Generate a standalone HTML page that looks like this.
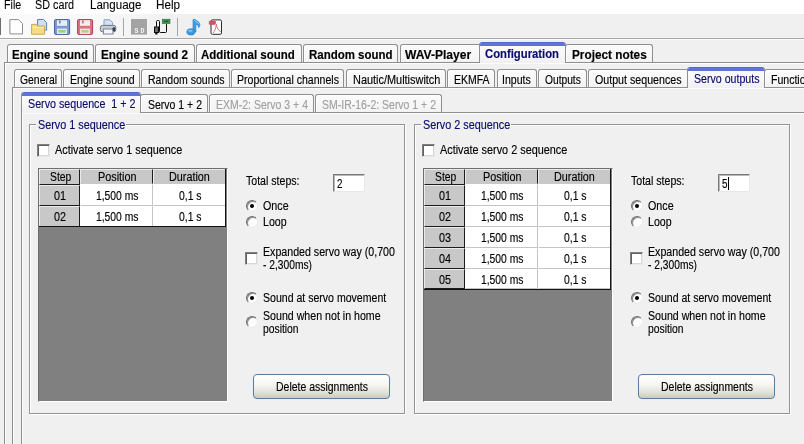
<!DOCTYPE html><html><head><meta charset="utf-8"><title>Servo sequence</title><style>
html,body{margin:0;padding:0}body{width:804px;height:444px;overflow:hidden;background:#f0f0f0;position:relative;font-family:"Liberation Sans", sans-serif}
#r{position:absolute;left:0;top:0;width:804px;height:444px;overflow:hidden;will-change:transform}
#r>div{position:absolute}
#r>span{position:absolute;white-space:pre;line-height:1;transform-origin:0 0;display:block;-webkit-text-stroke:0.15px}
</style></head><body><div id="r">
<div style="left:0px;top:0px;width:804px;height:13.5px;background:#fff"></div>
<div style="left:0px;top:37.5px;width:804px;height:1px;background:#a8a8a8"></div>
<div style="left:0px;top:38.5px;width:804px;height:1px;background:#fafafa"></div>
<div style="left:4px;top:62px;width:816px;height:398px;border:1px solid #8e8f8f;background:#f0f0f0;box-shadow:inset 1px 1px 0 #fcfcfc"></div>
<div style="left:7px;top:44px;width:87px;height:18px;background:linear-gradient(#fbfbfb,#f3f3f3);border:1px solid #8e8f8f;border-bottom:none;border-radius:3px 3px 0 0;box-sizing:border-box;box-shadow:inset 1px 1px 0 #fff"></div>
<div style="left:95px;top:44px;width:100px;height:18px;background:linear-gradient(#fbfbfb,#f3f3f3);border:1px solid #8e8f8f;border-bottom:none;border-radius:3px 3px 0 0;box-sizing:border-box;box-shadow:inset 1px 1px 0 #fff"></div>
<div style="left:196px;top:44px;width:106px;height:18px;background:linear-gradient(#fbfbfb,#f3f3f3);border:1px solid #8e8f8f;border-bottom:none;border-radius:3px 3px 0 0;box-sizing:border-box;box-shadow:inset 1px 1px 0 #fff"></div>
<div style="left:303px;top:44px;width:95px;height:18px;background:linear-gradient(#fbfbfb,#f3f3f3);border:1px solid #8e8f8f;border-bottom:none;border-radius:3px 3px 0 0;box-sizing:border-box;box-shadow:inset 1px 1px 0 #fff"></div>
<div style="left:400px;top:44px;width:81px;height:18px;background:linear-gradient(#fbfbfb,#f3f3f3);border:1px solid #8e8f8f;border-bottom:none;border-radius:3px 3px 0 0;box-sizing:border-box;box-shadow:inset 1px 1px 0 #fff"></div>
<div style="left:565px;top:44px;width:88px;height:18px;background:linear-gradient(#fbfbfb,#f3f3f3);border:1px solid #8e8f8f;border-bottom:none;border-radius:3px 3px 0 0;box-sizing:border-box;box-shadow:inset 1px 1px 0 #fff"></div>
<div style="left:479px;top:42px;width:87px;height:21px;background:linear-gradient(#fcfcfd 0,#f8f8fb 55%,#f0f0f0 100%);border:1px solid #8e8f8f;border-top:none;border-bottom:none;border-radius:3px 3px 0 0;box-sizing:border-box;overflow:hidden"><div style="left:-1px;top:0;width:87px;height:4px;background:linear-gradient(#4d61c2,#6177d8 35%,#5c71d1);position:absolute"></div></div>
<div style="left:12px;top:87px;width:808px;height:373px;border:1px solid #8e8f8f;background:#f0f0f0;box-shadow:inset 1px 1px 0 #fcfcfc"></div>
<div style="left:14px;top:69px;width:48px;height:18px;background:linear-gradient(#fbfbfb,#f3f3f3);border:1px solid #8e8f8f;border-bottom:none;border-radius:3px 3px 0 0;box-sizing:border-box;box-shadow:inset 1px 1px 0 #fff"></div>
<div style="left:63px;top:69px;width:77px;height:18px;background:linear-gradient(#fbfbfb,#f3f3f3);border:1px solid #8e8f8f;border-bottom:none;border-radius:3px 3px 0 0;box-sizing:border-box;box-shadow:inset 1px 1px 0 #fff"></div>
<div style="left:141px;top:69px;width:89px;height:18px;background:linear-gradient(#fbfbfb,#f3f3f3);border:1px solid #8e8f8f;border-bottom:none;border-radius:3px 3px 0 0;box-sizing:border-box;box-shadow:inset 1px 1px 0 #fff"></div>
<div style="left:231px;top:69px;width:113px;height:18px;background:linear-gradient(#fbfbfb,#f3f3f3);border:1px solid #8e8f8f;border-bottom:none;border-radius:3px 3px 0 0;box-sizing:border-box;box-shadow:inset 1px 1px 0 #fff"></div>
<div style="left:346px;top:69px;width:100px;height:18px;background:linear-gradient(#fbfbfb,#f3f3f3);border:1px solid #8e8f8f;border-bottom:none;border-radius:3px 3px 0 0;box-sizing:border-box;box-shadow:inset 1px 1px 0 #fff"></div>
<div style="left:447px;top:69px;width:48px;height:18px;background:linear-gradient(#fbfbfb,#f3f3f3);border:1px solid #8e8f8f;border-bottom:none;border-radius:3px 3px 0 0;box-sizing:border-box;box-shadow:inset 1px 1px 0 #fff"></div>
<div style="left:497px;top:69px;width:40px;height:18px;background:linear-gradient(#fbfbfb,#f3f3f3);border:1px solid #8e8f8f;border-bottom:none;border-radius:3px 3px 0 0;box-sizing:border-box;box-shadow:inset 1px 1px 0 #fff"></div>
<div style="left:538px;top:69px;width:49px;height:18px;background:linear-gradient(#fbfbfb,#f3f3f3);border:1px solid #8e8f8f;border-bottom:none;border-radius:3px 3px 0 0;box-sizing:border-box;box-shadow:inset 1px 1px 0 #fff"></div>
<div style="left:588px;top:69px;width:101px;height:18px;background:linear-gradient(#fbfbfb,#f3f3f3);border:1px solid #8e8f8f;border-bottom:none;border-radius:3px 3px 0 0;box-sizing:border-box;box-shadow:inset 1px 1px 0 #fff"></div>
<div style="left:764px;top:69px;width:67px;height:18px;background:linear-gradient(#fbfbfb,#f3f3f3);border:1px solid #8e8f8f;border-bottom:none;border-radius:3px 3px 0 0;box-sizing:border-box;box-shadow:inset 1px 1px 0 #fff"></div>
<div style="left:687px;top:67px;width:78px;height:21px;background:linear-gradient(#fcfcfd 0,#f8f8fb 55%,#f0f0f0 100%);border:1px solid #8e8f8f;border-top:none;border-bottom:none;border-radius:3px 3px 0 0;box-sizing:border-box;overflow:hidden"><div style="left:-1px;top:0;width:78px;height:4px;background:linear-gradient(#4d61c2,#6177d8 35%,#5c71d1);position:absolute"></div></div>
<div style="left:21px;top:112px;width:799px;height:348px;border:1px solid #8e8f8f;background:#f0f0f0;box-shadow:inset 1px 1px 0 #fcfcfc"></div>
<div style="left:140px;top:94px;width:68px;height:18px;background:linear-gradient(#fbfbfb,#f3f3f3);border:1px solid #8e8f8f;border-bottom:none;border-radius:3px 3px 0 0;box-sizing:border-box;box-shadow:inset 1px 1px 0 #fff"></div>
<div style="left:209px;top:94px;width:105px;height:18px;background:linear-gradient(#fbfbfb,#f3f3f3);border:1px solid #8e8f8f;border-bottom:none;border-radius:3px 3px 0 0;box-sizing:border-box;box-shadow:inset 1px 1px 0 #fff"></div>
<div style="left:315px;top:94px;width:127px;height:18px;background:linear-gradient(#fbfbfb,#f3f3f3);border:1px solid #8e8f8f;border-bottom:none;border-radius:3px 3px 0 0;box-sizing:border-box;box-shadow:inset 1px 1px 0 #fff"></div>
<div style="left:21px;top:92px;width:120px;height:21px;background:linear-gradient(#fcfcfd 0,#f8f8fb 55%,#f0f0f0 100%);border:1px solid #8e8f8f;border-top:none;border-bottom:none;border-radius:3px 3px 0 0;box-sizing:border-box;overflow:hidden"><div style="left:-1px;top:0;width:120px;height:4px;background:linear-gradient(#4d61c2,#6177d8 35%,#5c71d1);position:absolute"></div></div>
<div style="left:29px;top:124px;width:376px;height:290px;border:1px solid #949494;box-shadow:1px 1px 0 #fff, inset 1px 1px 0 #fff;box-sizing:border-box"></div>
<div style="left:36px;top:118px;width:90px;height:13px;background:#f0f0f0"></div>
<div style="left:37px;top:144px;width:13px;height:13px;box-sizing:border-box;background:#fff;border:1px solid;border-color:#808080 #e8e8e8 #e8e8e8 #808080;box-shadow:inset 1px 1px 0 #606060, inset -1px -1px 0 #d8d8d8"></div>
<div style="left:38px;top:168px;width:190px;height:234px;background:#808080;box-sizing:border-box;border:1px solid;border-color:#6e6e6e #fff #fff #6e6e6e"></div>
<div style="left:39px;top:169px;width:41px;height:16px;background:#c8c8c8;box-sizing:border-box;border:1px solid;border-color:#ebebeb #1c1c1c #1c1c1c #ebebeb"></div>
<div style="left:80px;top:169px;width:73px;height:15px;background:#c8c8c8;box-sizing:border-box;border:1px solid;border-color:#ebebeb #1c1c1c #c8c8c8 #ebebeb"></div>
<div style="left:153px;top:169px;width:73px;height:15px;background:#c8c8c8;box-sizing:border-box;border:1px solid;border-color:#ebebeb #1c1c1c #c8c8c8 #ebebeb"></div>
<div style="left:39px;top:185.0px;width:41px;height:20.900000000000006px;background:#c8c8c8;box-sizing:border-box;border:1px solid;border-color:#ebebeb #1c1c1c #1c1c1c #ebebeb"></div>
<div style="left:80px;top:184.0px;width:73px;height:21.900000000000006px;background:#fff;box-sizing:border-box;border:1px solid;border-color:#fff #c4c4c4 #c4c4c4 #fff"></div>
<div style="left:153px;top:184.0px;width:73px;height:21.900000000000006px;background:#fff;box-sizing:border-box;border:1px solid;border-color:#fff #c4c4c4 #c4c4c4 #fff"></div>
<div style="left:39px;top:205.9px;width:41px;height:20.900000000000006px;background:#c8c8c8;box-sizing:border-box;border:1px solid;border-color:#ebebeb #1c1c1c #1c1c1c #ebebeb"></div>
<div style="left:80px;top:205.9px;width:73px;height:20.900000000000006px;background:#fff;box-sizing:border-box;border:1px solid;border-color:#fff #c4c4c4 #c4c4c4 #fff"></div>
<div style="left:153px;top:205.9px;width:73px;height:20.900000000000006px;background:#fff;box-sizing:border-box;border:1px solid;border-color:#fff #c4c4c4 #c4c4c4 #fff"></div>
<div style="left:39px;top:226px;width:187px;height:1px;background:#111"></div>
<div style="left:225px;top:169px;width:1px;height:58px;background:#111"></div>
<div style="left:333px;top:174px;width:32px;height:18px;background:#fff;box-sizing:border-box;border:1px solid;border-color:#7a7a7a #e8e8e8 #e8e8e8 #7a7a7a;box-shadow:inset 1px 1px 0 #b8b8b8"></div>
<div style="left:246.3px;top:199.8px;width:12px;height:12px;box-sizing:border-box;border-radius:50%;background:#fcfcfc;border:1px solid;border-color:#6c6c6c #ebebeb #ebebeb #6c6c6c;box-shadow:inset 1px 1px 0 #8a8a8a"><div style="left:3px;top:3px;width:4px;height:4px;border-radius:50%;background:#000;position:absolute"></div></div>
<div style="left:246.3px;top:216px;width:12px;height:12px;box-sizing:border-box;border-radius:50%;background:#fcfcfc;border:1px solid;border-color:#6c6c6c #ebebeb #ebebeb #6c6c6c;box-shadow:inset 1px 1px 0 #8a8a8a"></div>
<div style="left:245px;top:252px;width:13px;height:13px;box-sizing:border-box;background:#fff;border:1px solid;border-color:#808080 #e8e8e8 #e8e8e8 #808080;box-shadow:inset 1px 1px 0 #606060, inset -1px -1px 0 #d8d8d8"></div>
<div style="left:246.3px;top:291.8px;width:12px;height:12px;box-sizing:border-box;border-radius:50%;background:#fcfcfc;border:1px solid;border-color:#6c6c6c #ebebeb #ebebeb #6c6c6c;box-shadow:inset 1px 1px 0 #8a8a8a"><div style="left:3px;top:3px;width:4px;height:4px;border-radius:50%;background:#000;position:absolute"></div></div>
<div style="left:246.3px;top:315.5px;width:12px;height:12px;box-sizing:border-box;border-radius:50%;background:#fcfcfc;border:1px solid;border-color:#6c6c6c #ebebeb #ebebeb #6c6c6c;box-shadow:inset 1px 1px 0 #8a8a8a"></div>
<div style="left:253px;top:374px;width:137px;height:24.5px;box-sizing:border-box;border:1px solid #5c7d9b;border-radius:4px;background:linear-gradient(#ffffff 0%,#f6f6f3 40%,#e2e2dc 75%,#c9ccbd 100%);box-shadow:0 0 0 1px rgba(225,238,248,.7)"></div>
<div style="left:414px;top:124px;width:376px;height:290px;border:1px solid #949494;box-shadow:1px 1px 0 #fff, inset 1px 1px 0 #fff;box-sizing:border-box"></div>
<div style="left:421px;top:118px;width:90px;height:13px;background:#f0f0f0"></div>
<div style="left:422px;top:144px;width:13px;height:13px;box-sizing:border-box;background:#fff;border:1px solid;border-color:#808080 #e8e8e8 #e8e8e8 #808080;box-shadow:inset 1px 1px 0 #606060, inset -1px -1px 0 #d8d8d8"></div>
<div style="left:423px;top:168px;width:190px;height:234px;background:#808080;box-sizing:border-box;border:1px solid;border-color:#6e6e6e #fff #fff #6e6e6e"></div>
<div style="left:424px;top:169px;width:41px;height:16px;background:#c8c8c8;box-sizing:border-box;border:1px solid;border-color:#ebebeb #1c1c1c #1c1c1c #ebebeb"></div>
<div style="left:465px;top:169px;width:73px;height:15px;background:#c8c8c8;box-sizing:border-box;border:1px solid;border-color:#ebebeb #1c1c1c #c8c8c8 #ebebeb"></div>
<div style="left:538px;top:169px;width:73px;height:15px;background:#c8c8c8;box-sizing:border-box;border:1px solid;border-color:#ebebeb #1c1c1c #c8c8c8 #ebebeb"></div>
<div style="left:424px;top:185.0px;width:41px;height:20.900000000000006px;background:#c8c8c8;box-sizing:border-box;border:1px solid;border-color:#ebebeb #1c1c1c #1c1c1c #ebebeb"></div>
<div style="left:465px;top:184.0px;width:73px;height:21.900000000000006px;background:#fff;box-sizing:border-box;border:1px solid;border-color:#fff #c4c4c4 #c4c4c4 #fff"></div>
<div style="left:538px;top:184.0px;width:73px;height:21.900000000000006px;background:#fff;box-sizing:border-box;border:1px solid;border-color:#fff #c4c4c4 #c4c4c4 #fff"></div>
<div style="left:424px;top:205.9px;width:41px;height:20.900000000000006px;background:#c8c8c8;box-sizing:border-box;border:1px solid;border-color:#ebebeb #1c1c1c #1c1c1c #ebebeb"></div>
<div style="left:465px;top:205.9px;width:73px;height:20.900000000000006px;background:#fff;box-sizing:border-box;border:1px solid;border-color:#fff #c4c4c4 #c4c4c4 #fff"></div>
<div style="left:538px;top:205.9px;width:73px;height:20.900000000000006px;background:#fff;box-sizing:border-box;border:1px solid;border-color:#fff #c4c4c4 #c4c4c4 #fff"></div>
<div style="left:424px;top:226.8px;width:41px;height:20.899999999999977px;background:#c8c8c8;box-sizing:border-box;border:1px solid;border-color:#ebebeb #1c1c1c #1c1c1c #ebebeb"></div>
<div style="left:465px;top:226.8px;width:73px;height:20.899999999999977px;background:#fff;box-sizing:border-box;border:1px solid;border-color:#fff #c4c4c4 #c4c4c4 #fff"></div>
<div style="left:538px;top:226.8px;width:73px;height:20.899999999999977px;background:#fff;box-sizing:border-box;border:1px solid;border-color:#fff #c4c4c4 #c4c4c4 #fff"></div>
<div style="left:424px;top:247.7px;width:41px;height:20.900000000000034px;background:#c8c8c8;box-sizing:border-box;border:1px solid;border-color:#ebebeb #1c1c1c #1c1c1c #ebebeb"></div>
<div style="left:465px;top:247.7px;width:73px;height:20.900000000000034px;background:#fff;box-sizing:border-box;border:1px solid;border-color:#fff #c4c4c4 #c4c4c4 #fff"></div>
<div style="left:538px;top:247.7px;width:73px;height:20.900000000000034px;background:#fff;box-sizing:border-box;border:1px solid;border-color:#fff #c4c4c4 #c4c4c4 #fff"></div>
<div style="left:424px;top:268.6px;width:41px;height:20.899999999999977px;background:#c8c8c8;box-sizing:border-box;border:1px solid;border-color:#ebebeb #1c1c1c #1c1c1c #ebebeb"></div>
<div style="left:465px;top:268.6px;width:73px;height:20.899999999999977px;background:#fff;box-sizing:border-box;border:1px solid;border-color:#fff #c4c4c4 #c4c4c4 #fff"></div>
<div style="left:538px;top:268.6px;width:73px;height:20.899999999999977px;background:#fff;box-sizing:border-box;border:1px solid;border-color:#fff #c4c4c4 #c4c4c4 #fff"></div>
<div style="left:424px;top:289px;width:187px;height:1px;background:#111"></div>
<div style="left:610px;top:169px;width:1px;height:121px;background:#111"></div>
<div style="left:718px;top:174px;width:32px;height:18px;background:#fff;box-sizing:border-box;border:1px solid;border-color:#7a7a7a #e8e8e8 #e8e8e8 #7a7a7a;box-shadow:inset 1px 1px 0 #b8b8b8"></div>
<div style="left:728.0px;top:177px;width:1px;height:13px;background:#000"></div>
<div style="left:631.3px;top:199.8px;width:12px;height:12px;box-sizing:border-box;border-radius:50%;background:#fcfcfc;border:1px solid;border-color:#6c6c6c #ebebeb #ebebeb #6c6c6c;box-shadow:inset 1px 1px 0 #8a8a8a"><div style="left:3px;top:3px;width:4px;height:4px;border-radius:50%;background:#000;position:absolute"></div></div>
<div style="left:631.3px;top:216px;width:12px;height:12px;box-sizing:border-box;border-radius:50%;background:#fcfcfc;border:1px solid;border-color:#6c6c6c #ebebeb #ebebeb #6c6c6c;box-shadow:inset 1px 1px 0 #8a8a8a"></div>
<div style="left:630px;top:252px;width:13px;height:13px;box-sizing:border-box;background:#fff;border:1px solid;border-color:#808080 #e8e8e8 #e8e8e8 #808080;box-shadow:inset 1px 1px 0 #606060, inset -1px -1px 0 #d8d8d8"></div>
<div style="left:631.3px;top:291.8px;width:12px;height:12px;box-sizing:border-box;border-radius:50%;background:#fcfcfc;border:1px solid;border-color:#6c6c6c #ebebeb #ebebeb #6c6c6c;box-shadow:inset 1px 1px 0 #8a8a8a"><div style="left:3px;top:3px;width:4px;height:4px;border-radius:50%;background:#000;position:absolute"></div></div>
<div style="left:631.3px;top:315.5px;width:12px;height:12px;box-sizing:border-box;border-radius:50%;background:#fcfcfc;border:1px solid;border-color:#6c6c6c #ebebeb #ebebeb #6c6c6c;box-shadow:inset 1px 1px 0 #8a8a8a"></div>
<div style="left:638px;top:374px;width:137px;height:24.5px;box-sizing:border-box;border:1px solid #5c7d9b;border-radius:4px;background:linear-gradient(#ffffff 0%,#f6f6f3 40%,#e2e2dc 75%,#c9ccbd 100%);box-shadow:0 0 0 1px rgba(225,238,248,.7)"></div>
<div style="left:0;top:13.5px;width:260px;height:24px;background:linear-gradient(90deg,#fbfbfb 0,#f8f8f8 90px,#f0f0f0 185px)"></div>
<div style="left:0;top:18px;width:1px;height:17px;background:#6e6e6e"></div>
<div style="left:123px;top:18px;width:1px;height:18px;background:#a6a6a6"></div>
<div style="left:177px;top:18px;width:1px;height:18px;background:#a6a6a6"></div>
<svg style="position:absolute;left:0;top:0" width="240" height="40" viewBox="0 0 240 40">
 <!-- new -->
 <path d="M9.9 19.6h8.6l4 4v10.3h-12.6z" fill="#fff" stroke="#8c8c8c" stroke-width="1" stroke-linejoin="round"/>
 <!-- open -->
 <path d="M37.6 19.5h5.8l3.2 3.2v7.4h-9z" fill="#cfe0f3" stroke="#5f7fb6" stroke-width="1" stroke-linejoin="round"/>
 <path d="M31.6 24.4h5.2l1 1.6h6.8v8.2h-13z" fill="#f6dc8a" stroke="#c9a74d" stroke-width="1" stroke-linejoin="round"/>
 <rect x="32.6" y="27" width="11" height="1" fill="#fbeec0"/>
 <!-- save blue -->
 <rect x="54.6" y="19.6" width="15" height="14.8" rx="1" fill="#7f9bd6" stroke="#3f5f9f" stroke-width="1"/>
 <rect x="57" y="20.2" width="10" height="5.6" fill="#e4eefa"/>
 <rect x="59.4" y="20.4" width="1" height="3" fill="#30406a"/>
 <rect x="57" y="28.6" width="10" height="5.4" fill="#dfe9f5"/>
 <rect x="58.4" y="30" width="7.2" height="2.6" fill="#9fd07c"/>
 <!-- save red -->
 <rect x="77.6" y="19.6" width="15" height="14.8" rx="1" fill="#d97282" stroke="#b33c50" stroke-width="1"/>
 <rect x="80" y="20.2" width="10" height="5.6" fill="#fbe9ec"/>
 <rect x="82.4" y="20.4" width="1" height="3" fill="#6a3040"/>
 <rect x="80" y="28.6" width="10" height="5.4" fill="#f5e0e4"/>
 <rect x="81.4" y="30" width="7.2" height="2.6" fill="#b4d27c"/>
 <!-- print -->
 <path d="M104 26v-6.2h6l2.6 2.6v3.6z" fill="#d4e3f4" stroke="#8aa0c0" stroke-width="1" stroke-linejoin="round"/>
 <rect x="100.4" y="25.4" width="15.4" height="6.4" rx="2" fill="#c9ced6" stroke="#6d7683" stroke-width="1"/>
 <rect x="103.4" y="29" width="9.6" height="5" fill="#f4f6f9" stroke="#7b8593" stroke-width="1"/>
 <rect x="112.6" y="27.2" width="2.6" height="4" rx="1" fill="#3a3f48"/>
 <!-- SD -->
 <rect x="131" y="19" width="16" height="15.6" fill="#a3a3a3"/>
 <text x="134.4" y="33.2" font-family="Liberation Mono, monospace" font-weight="bold" font-size="6.6" fill="#f4f4f4" textLength="10" lengthAdjust="spacing">SD</text>
 <!-- usb -->
 <rect x="162.2" y="19.2" width="7.8" height="4.4" fill="#3f9252" stroke="#2e7440" stroke-width=".6"/>
 <rect x="164" y="20.8" width="4.2" height="1.1" fill="#1d5229"/>
 <path d="M156.5 26.800V21.500q0-1 1-1h1q1 0 1 1V31.500q0 1 1 1h5q1 0 1-1V24" fill="none" stroke="#0c0c0c" stroke-width="1"/>
 <rect x="154.500" y="27" width="4" height="5.500" fill="#6c6c6c" stroke="#0c0c0c" stroke-width="1"/>
 <rect x="155.2" y="33" width="2.3" height="1.5" fill="#111"/>
 <!-- music -->
 <path d="M193 19.500h2.400c.8 1.300 4.300 2 4.500 5c.1 1.300-.4 2.400-1.300 3.200c.1-1.900-1-3-2.700-3.400v7.700h-2.900z" fill="#3a9fe8" stroke="#1f7cc6" stroke-width=".6" stroke-linejoin="round"/>
 <ellipse cx="190.900" cy="31.900" rx="4.100" ry="3.100" fill="#3a9be4" stroke="#1f74bc" stroke-width=".6"/>
 <ellipse cx="190.200" cy="30.700" rx="2.300" ry="1" fill="#8fd0fa" opacity=".8"/>
 <path d="M194.300 20.300c1 1.200 3.800 1.800 4.600 3.800" stroke="#9bd8fb" stroke-width="1" fill="none" opacity=".9"/>
 <!-- pdf -->
 <rect x="211" y="19.900" width="10.500" height="14.400" rx="1.400" fill="#fdfdfd" stroke="#2e2e2e" stroke-width="1"/>
 <rect x="209.200" y="21" width="6.300" height="3.400" rx=".8" fill="#d55465" stroke="#b03a4c" stroke-width=".5"/>
 <path d="M213 33c1.800-2 3-4.800 3.400-8.800c.2 3 1.600 5.800 4.200 7.400" fill="none" stroke="#de6f7c" stroke-width="1"/>
</svg>

<span id="t0" style="left:3.70px;top:-0.78px;font-size:12.5px;font-weight:normal;color:#000;transform:scaleX(0.8533);-webkit-text-stroke:0.1px">File</span>
<span id="t1" style="left:35.40px;top:-0.78px;font-size:12.5px;font-weight:normal;color:#000;transform:scaleX(0.8637);-webkit-text-stroke:0.1px">SD card</span>
<span id="t2" style="left:89.50px;top:-0.78px;font-size:12.5px;font-weight:normal;color:#000;transform:scaleX(0.9258);-webkit-text-stroke:0.1px">Language</span>
<span id="t3" style="left:155.70px;top:-0.78px;font-size:12.5px;font-weight:normal;color:#000;transform:scaleX(0.9371);-webkit-text-stroke:0.1px">Help</span>
<span id="t4" style="left:12.00px;top:48.84px;font-size:12px;font-weight:bold;color:#000;transform:scaleX(0.9579)">Engine sound</span>
<span id="t5" style="left:100.70px;top:48.84px;font-size:12px;font-weight:bold;color:#000;transform:scaleX(0.9749)">Engine sound 2</span>
<span id="t6" style="left:201.30px;top:48.84px;font-size:12px;font-weight:bold;color:#000;transform:scaleX(0.9561)">Additional sound</span>
<span id="t7" style="left:308.50px;top:48.84px;font-size:12px;font-weight:bold;color:#000;transform:scaleX(0.9562)">Random sound</span>
<span id="t8" style="left:405.40px;top:48.84px;font-size:12px;font-weight:bold;color:#000;transform:scaleX(1.0059)">WAV-Player</span>
<span id="t9" style="left:571.70px;top:48.84px;font-size:12px;font-weight:bold;color:#000;transform:scaleX(0.9825)">Project notes</span>
<span id="t10" style="left:485.00px;top:47.84px;font-size:12px;font-weight:bold;color:#0b0b6b;transform:scaleX(0.9408)">Configuration</span>
<span id="t11" style="left:19.50px;top:73.84px;font-size:12px;font-weight:normal;color:#000;transform:scaleX(0.8664)">General</span>
<span id="t12" style="left:69.70px;top:73.84px;font-size:12px;font-weight:normal;color:#000;transform:scaleX(0.8814)">Engine sound</span>
<span id="t13" style="left:147.70px;top:73.84px;font-size:12px;font-weight:normal;color:#000;transform:scaleX(0.8765)">Random sounds</span>
<span id="t14" style="left:237.40px;top:73.84px;font-size:12px;font-weight:normal;color:#000;transform:scaleX(0.8779)">Proportional channels</span>
<span id="t15" style="left:352.80px;top:73.84px;font-size:12px;font-weight:normal;color:#000;transform:scaleX(0.9101)">Nautic/Multiswitch</span>
<span id="t16" style="left:453.50px;top:73.84px;font-size:12px;font-weight:normal;color:#000;transform:scaleX(0.8725)">EKMFA</span>
<span id="t17" style="left:502.30px;top:73.84px;font-size:12px;font-weight:normal;color:#000;transform:scaleX(0.8776)">Inputs</span>
<span id="t18" style="left:544.90px;top:73.84px;font-size:12px;font-weight:normal;color:#000;transform:scaleX(0.8517)">Outputs</span>
<span id="t19" style="left:594.60px;top:73.84px;font-size:12px;font-weight:normal;color:#000;transform:scaleX(0.8880)">Output sequences</span>
<span id="t20" style="left:771.40px;top:73.84px;font-size:12px;font-weight:normal;color:#000;transform:scaleX(0.8783)">Functions</span>
<span id="t21" style="left:693.50px;top:72.84px;font-size:12px;font-weight:normal;color:#0b0b6b;transform:scaleX(0.8846)">Servo outputs</span>
<span id="t22" style="left:148.00px;top:98.84px;font-size:12px;font-weight:normal;color:#000;transform:scaleX(0.8749)">Servo 1 + 2</span>
<span id="t23" style="left:216.00px;top:98.84px;font-size:12px;font-weight:normal;color:#a0a0a0;transform:scaleX(0.8758)">EXM-2: Servo 3 + 4</span>
<span id="t24" style="left:322.00px;top:98.84px;font-size:12px;font-weight:normal;color:#a0a0a0;transform:scaleX(0.8743)">SM-IR-16-2: Servo 1 + 2</span>
<span id="t25" style="left:27.50px;top:97.84px;font-size:12px;font-weight:normal;color:#0b0b6b;transform:scaleX(0.8927)">Servo sequence  1 + 2</span>
<span id="t26" style="left:38.00px;top:118.84px;font-size:12px;font-weight:normal;color:#0b0b6b;transform:scaleX(0.9025)">Servo 1 sequence</span>
<span id="t27" style="left:54.70px;top:144.14px;font-size:12px;font-weight:normal;color:#000;transform:scaleX(0.9044)">Activate servo 1 sequence</span>
<span id="t28" style="left:49.70px;top:171.04px;font-size:12px;font-weight:normal;color:#000;transform:scaleX(0.8628)">Step</span>
<span id="t29" style="left:97.50px;top:171.04px;font-size:12px;font-weight:normal;color:#000;transform:scaleX(0.9016)">Position</span>
<span id="t30" style="left:169.20px;top:171.04px;font-size:12px;font-weight:normal;color:#000;transform:scaleX(0.8995)">Duration</span>
<span id="t31" style="left:54.00px;top:190.04px;font-size:12px;font-weight:normal;color:#000;transform:scaleX(0.8982)">01</span>
<span id="t32" style="left:95.50px;top:190.04px;font-size:12px;font-weight:normal;color:#000;transform:scaleX(0.8610)">1,500 ms</span>
<span id="t33" style="left:178.50px;top:190.04px;font-size:12px;font-weight:normal;color:#000;transform:scaleX(0.8649)">0,1 s</span>
<span id="t34" style="left:54.00px;top:210.94px;font-size:12px;font-weight:normal;color:#000;transform:scaleX(0.8982)">02</span>
<span id="t35" style="left:95.50px;top:210.94px;font-size:12px;font-weight:normal;color:#000;transform:scaleX(0.8610)">1,500 ms</span>
<span id="t36" style="left:178.50px;top:210.94px;font-size:12px;font-weight:normal;color:#000;transform:scaleX(0.8649)">0,1 s</span>
<span id="t37" style="left:246.00px;top:174.84px;font-size:12px;font-weight:normal;color:#000;transform:scaleX(0.8813)">Total steps:</span>
<span id="t38" style="left:337.00px;top:177.84px;font-size:12px;font-weight:normal;color:#000;transform:scaleX(0.8224)">2</span>
<span id="t39" style="left:263.40px;top:199.84px;font-size:12px;font-weight:normal;color:#000;transform:scaleX(0.8924)">Once</span>
<span id="t40" style="left:263.40px;top:216.14px;font-size:12px;font-weight:normal;color:#000;transform:scaleX(0.8838)">Loop</span>
<span id="t41" style="left:263.40px;top:245.84px;font-size:12px;font-weight:normal;color:#000;transform:scaleX(0.8866)">Expanded servo way (0,700</span>
<span id="t42" style="left:263.40px;top:259.14px;font-size:12px;font-weight:normal;color:#000;transform:scaleX(0.8543)">- 2,300ms)</span>
<span id="t43" style="left:263.40px;top:291.84px;font-size:12px;font-weight:normal;color:#000;transform:scaleX(0.8795)">Sound at servo movement</span>
<span id="t44" style="left:263.40px;top:309.84px;font-size:12px;font-weight:normal;color:#000;transform:scaleX(0.8858)">Sound when not in home</span>
<span id="t45" style="left:263.40px;top:322.84px;font-size:12px;font-weight:normal;color:#000;transform:scaleX(0.8604)">position</span>
<span id="t46" style="left:276.30px;top:380.84px;font-size:12px;font-weight:normal;color:#000;transform:scaleX(0.8720)">Delete assignments</span>
<span id="t47" style="left:423.00px;top:118.84px;font-size:12px;font-weight:normal;color:#0b0b6b;transform:scaleX(0.9025)">Servo 2 sequence</span>
<span id="t48" style="left:439.70px;top:144.14px;font-size:12px;font-weight:normal;color:#000;transform:scaleX(0.9044)">Activate servo 2 sequence</span>
<span id="t49" style="left:434.70px;top:171.04px;font-size:12px;font-weight:normal;color:#000;transform:scaleX(0.8628)">Step</span>
<span id="t50" style="left:482.50px;top:171.04px;font-size:12px;font-weight:normal;color:#000;transform:scaleX(0.9016)">Position</span>
<span id="t51" style="left:554.20px;top:171.04px;font-size:12px;font-weight:normal;color:#000;transform:scaleX(0.8995)">Duration</span>
<span id="t52" style="left:439.00px;top:190.04px;font-size:12px;font-weight:normal;color:#000;transform:scaleX(0.8982)">01</span>
<span id="t53" style="left:480.50px;top:190.04px;font-size:12px;font-weight:normal;color:#000;transform:scaleX(0.8610)">1,500 ms</span>
<span id="t54" style="left:563.50px;top:190.04px;font-size:12px;font-weight:normal;color:#000;transform:scaleX(0.8649)">0,1 s</span>
<span id="t55" style="left:439.00px;top:210.94px;font-size:12px;font-weight:normal;color:#000;transform:scaleX(0.8982)">02</span>
<span id="t56" style="left:480.50px;top:210.94px;font-size:12px;font-weight:normal;color:#000;transform:scaleX(0.8610)">1,500 ms</span>
<span id="t57" style="left:563.50px;top:210.94px;font-size:12px;font-weight:normal;color:#000;transform:scaleX(0.8649)">0,1 s</span>
<span id="t58" style="left:439.00px;top:231.84px;font-size:12px;font-weight:normal;color:#000;transform:scaleX(0.8982)">03</span>
<span id="t59" style="left:480.50px;top:231.84px;font-size:12px;font-weight:normal;color:#000;transform:scaleX(0.8610)">1,500 ms</span>
<span id="t60" style="left:563.50px;top:231.84px;font-size:12px;font-weight:normal;color:#000;transform:scaleX(0.8649)">0,1 s</span>
<span id="t61" style="left:439.00px;top:252.74px;font-size:12px;font-weight:normal;color:#000;transform:scaleX(0.8982)">04</span>
<span id="t62" style="left:480.50px;top:252.74px;font-size:12px;font-weight:normal;color:#000;transform:scaleX(0.8610)">1,500 ms</span>
<span id="t63" style="left:563.50px;top:252.74px;font-size:12px;font-weight:normal;color:#000;transform:scaleX(0.8649)">0,1 s</span>
<span id="t64" style="left:439.00px;top:273.64px;font-size:12px;font-weight:normal;color:#000;transform:scaleX(0.8982)">05</span>
<span id="t65" style="left:480.50px;top:273.64px;font-size:12px;font-weight:normal;color:#000;transform:scaleX(0.8610)">1,500 ms</span>
<span id="t66" style="left:563.50px;top:273.64px;font-size:12px;font-weight:normal;color:#000;transform:scaleX(0.8649)">0,1 s</span>
<span id="t67" style="left:631.00px;top:174.84px;font-size:12px;font-weight:normal;color:#000;transform:scaleX(0.8813)">Total steps:</span>
<span id="t68" style="left:722.00px;top:177.84px;font-size:12px;font-weight:normal;color:#000;transform:scaleX(0.8224)">5</span>
<span id="t69" style="left:648.40px;top:199.84px;font-size:12px;font-weight:normal;color:#000;transform:scaleX(0.8924)">Once</span>
<span id="t70" style="left:648.40px;top:216.14px;font-size:12px;font-weight:normal;color:#000;transform:scaleX(0.8838)">Loop</span>
<span id="t71" style="left:648.40px;top:245.84px;font-size:12px;font-weight:normal;color:#000;transform:scaleX(0.8866)">Expanded servo way (0,700</span>
<span id="t72" style="left:648.40px;top:259.14px;font-size:12px;font-weight:normal;color:#000;transform:scaleX(0.8543)">- 2,300ms)</span>
<span id="t73" style="left:648.40px;top:291.84px;font-size:12px;font-weight:normal;color:#000;transform:scaleX(0.8795)">Sound at servo movement</span>
<span id="t74" style="left:648.40px;top:309.84px;font-size:12px;font-weight:normal;color:#000;transform:scaleX(0.8858)">Sound when not in home</span>
<span id="t75" style="left:648.40px;top:322.84px;font-size:12px;font-weight:normal;color:#000;transform:scaleX(0.8604)">position</span>
<span id="t76" style="left:661.30px;top:380.84px;font-size:12px;font-weight:normal;color:#000;transform:scaleX(0.8720)">Delete assignments</span>
</div></body></html>
